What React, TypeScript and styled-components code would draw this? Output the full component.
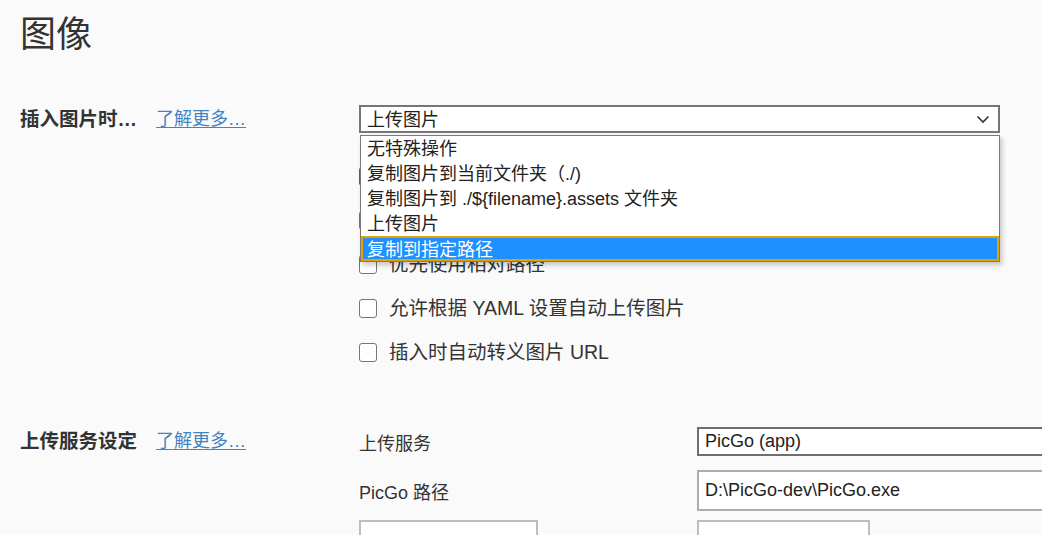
import React from "react";
import styled, { createGlobalStyle } from "styled-components";

const FONT = `"Liberation Sans", "Noto Sans CJK SC", sans-serif`;

const Global = createGlobalStyle`
  html, body {
    margin: 0;
    padding: 0;
    background: #fafafa;
    overflow: hidden;
  }
  body {
    font-family: ${FONT};
    color: #333;
  }
`;

const Page = styled.div`
  padding: 13px 0 0 20px;
  width: 1100px;
`;

const Title = styled.h1`
  margin: 0;
  font-size: 36px;
  line-height: 44px;
  font-weight: 400;
  color: #333;
`;

const Section = styled.section<{ $top: number }>`
  display: grid;
  grid-template-columns: 339px 1fr;
  align-items: start;
  margin-top: ${(p) => p.$top}px;
`;

const Heading = styled.div<{ $lh: number }>`
  display: flex;
  align-items: center;
  gap: 19px;
  line-height: ${(p) => p.$lh}px;
  height: ${(p) => p.$lh}px;
`;

const HeadingText = styled.span`
  font-size: 19.5px;
  font-weight: 700;
  color: #333;
`;

const Link = styled.a`
  font-size: 18px;
  color: #4183c4;
  text-decoration: underline;
  text-underline-offset: 2px;
  cursor: pointer;
`;

const Content = styled.div`
  display: flex;
  flex-direction: column;
`;

const SelectWrap = styled.div`
  position: relative;
  width: 641px;
`;

const SelectBox = styled.div`
  box-sizing: border-box;
  height: 28px;
  border: 2px solid #767676;
  background: #fff;
  display: flex;
  align-items: center;
  justify-content: space-between;
  padding: 0 8px 2px 6px;
  font-size: 18px;
  color: #222;
`;

const Chevron = styled.svg`
  width: 14px;
  height: 10px;
  margin-top: 1px;
`;

const List = styled.ul`
  position: absolute;
  top: 30px;
  left: 1px;
  width: 640px;
  box-sizing: border-box;
  margin: 0;
  padding: 0;
  list-style: none;
  background: #fff;
  border: 1px solid #7a7a7a;
  box-shadow: 2px 3px 5px rgba(0, 0, 0, 0.22);
  z-index: 10;
`;

const Item = styled.li<{ $selected?: boolean }>`
  box-sizing: border-box;
  height: 25px;
  display: flex;
  align-items: center;
  padding: 0 0 ${(p) => (p.$selected ? 2 : 3)}px ${(p) => (p.$selected ? 4 : 6)}px;
  font-size: 18px;
  white-space: pre;
  color: ${(p) => (p.$selected ? "#fff" : "#222")};
  background: ${(p) => (p.$selected ? "#1e90ff" : "transparent")};
  border: ${(p) => (p.$selected ? "2px solid #e8a000" : "none")};
`;

const Checks = styled.div`
  margin-top: 21px;
  display: flex;
  flex-direction: column;
`;

const CheckRow = styled.label`
  height: 44px;
  display: flex;
  align-items: center;
  gap: 12px;
  font-size: 19.5px;
  color: #333;
`;

const CheckText = styled.span`
  padding-bottom: 3px;
`;

const Box = styled.span<{ $checked?: boolean }>`
  box-sizing: border-box;
  width: 18px;
  height: 19px;
  border-radius: 3px;
  border: 1px solid ${(p) => (p.$checked ? "#0075ff" : "#767676")};
  background: ${(p) => (p.$checked ? "#0075ff" : "#fff")};
  flex: none;
`;

const FieldRow = styled.div<{ $mt: number }>`
  display: grid;
  grid-template-columns: 338px 1fr;
  align-items: center;
  margin-top: ${(p) => p.$mt}px;
`;

const FieldLabel = styled.span`
  font-size: 18px;
  color: #333;
`;

const Field = styled.div<{ $h: number; $border: string; $w?: number }>`
  box-sizing: border-box;
  height: ${(p) => p.$h}px;
  width: ${(p) => (p.$w ? `${p.$w}px` : "420px")};
  border: 2px solid ${(p) => p.$border};
  background: #fff;
  display: flex;
  align-items: center;
  padding-left: 6px;
  font-size: 18px;
  color: #222;
`;

const Inline = styled.div`
  display: flex;
  align-items: flex-start;
  gap: 8px;
`;

const Dots = styled.span`
  color: #4183c4;
  font-size: 18px;
  line-height: 18px;
  margin-top: 2px;
`;

const options = [
  "无特殊操作",
  "复制图片到当前文件夹（./)",
  "复制图片到 ./${filename}.assets 文件夹",
  "上传图片",
  "复制到指定路径",
];

const checks = [
  { label: "对本地位置的图片应用上述规则", checked: true },
  { label: "对网络位置的图片应用上述规则", checked: false },
  { label: "优先使用相对路径", checked: false },
  { label: "允许根据 YAML 设置自动上传图片", checked: false },
  { label: "插入时自动转义图片 URL", checked: false },
];

export default function App() {
  return (
    <>
      <Global />
      <Page>
        <Title>图像</Title>
        <Section $top={48}>
          <Heading $lh={28}>
            <HeadingText>插入图片时…</HeadingText>
            <Link>了解更多…</Link>
          </Heading>
          <Content>
            <SelectWrap>
              <SelectBox>
                <span>上传图片</span>
                <Chevron viewBox="0 0 14 10">
                  <path d="M1.5 2.5 L7 8 L12.5 2.5" fill="none" stroke="#333" strokeWidth="1.6" />
                </Chevron>
              </SelectBox>
              <List>
                {options.map((o, i) => (
                  <Item key={o} $selected={i === options.length - 1}>
                    {o}
                  </Item>
                ))}
              </List>
            </SelectWrap>
            <Checks>
              {checks.map((c) => (
                <CheckRow key={c.label}>
                  <Box $checked={c.checked} />
                  <CheckText>{c.label}</CheckText>
                </CheckRow>
              ))}
            </Checks>
          </Content>
        </Section>
        <Section $top={53}>
          <Heading $lh={29}>
            <HeadingText>上传服务设定</HeadingText>
            <Link>了解更多…</Link>
          </Heading>
          <Content>
            <FieldRow $mt={0}>
              <FieldLabel>上传服务</FieldLabel>
              <Field $h={29} $border="#6e6e6e">PicGo (app)</Field>
            </FieldRow>
            <FieldRow $mt={14}>
              <FieldLabel>PicGo 路径</FieldLabel>
              <Field $h={41} $border="#adadad">D:\PicGo-dev\PicGo.exe</Field>
            </FieldRow>
            <FieldRow $mt={9}>
              <Field $h={40} $border="#bdbdbd" $w={179} />
              <Inline>
                <Field $h={40} $border="#bdbdbd" $w={173} />
                <Dots>…</Dots>
              </Inline>
            </FieldRow>
          </Content>
        </Section>
      </Page>
    </>
  );
}
